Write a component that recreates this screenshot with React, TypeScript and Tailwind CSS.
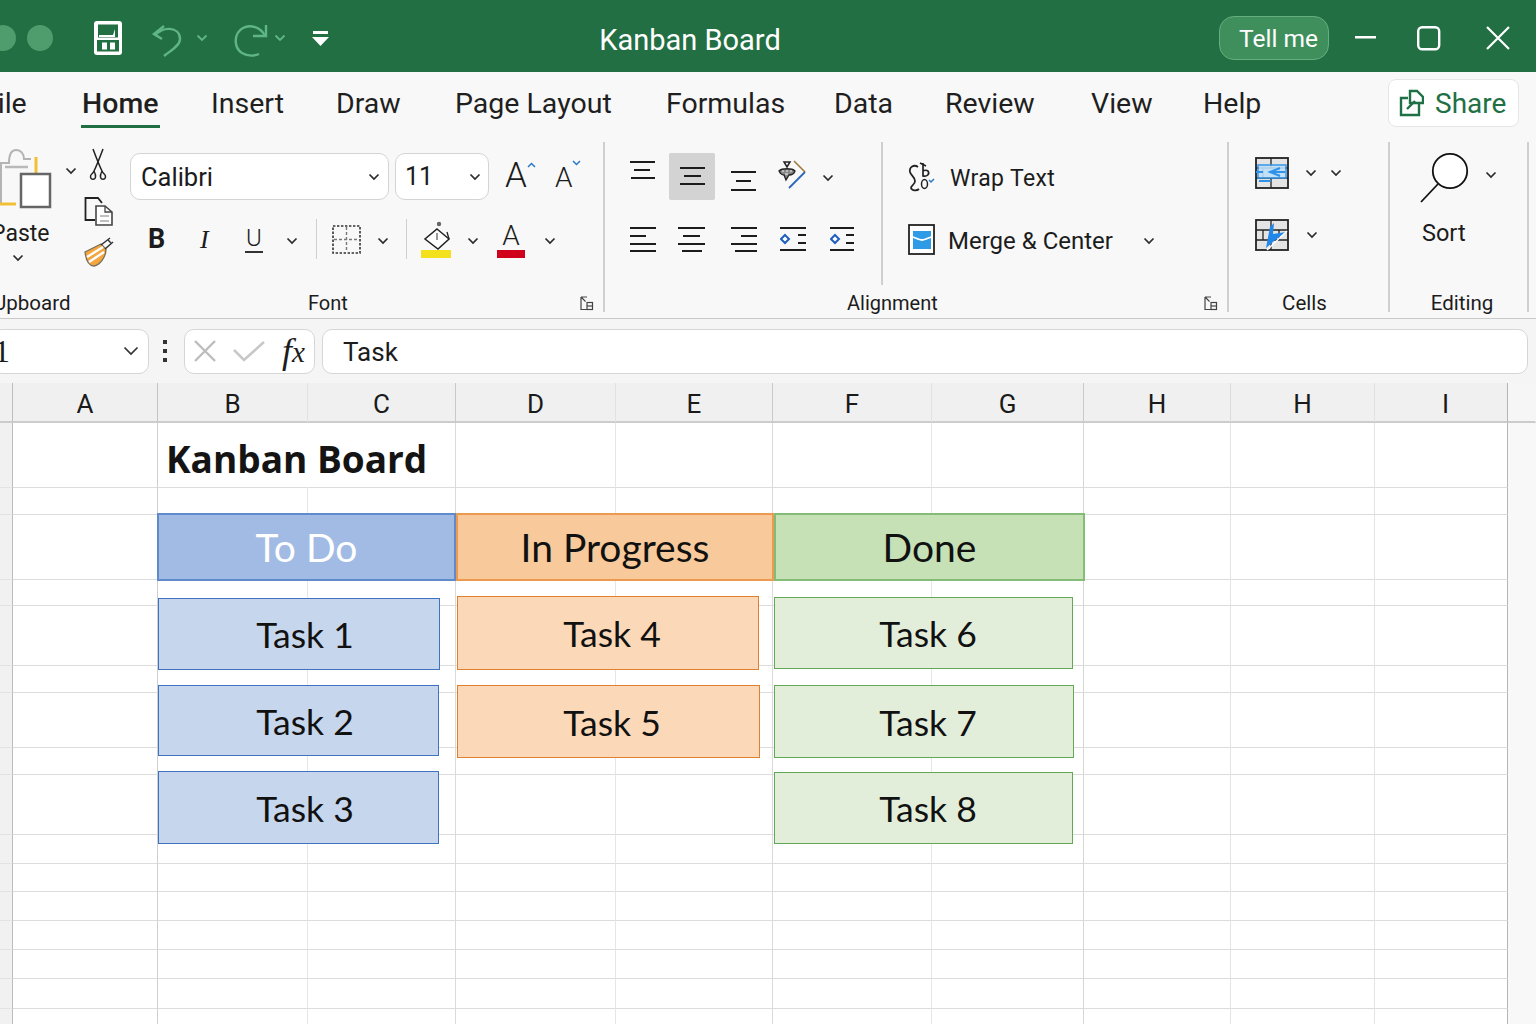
import React from "react";

const Chev = ({ className = "" }: { className?: string }) => (
  <svg width="12" height="8" viewBox="0 0 12 8" fill="none" className={"shrink-0 " + className}>
    <path d="M1.5 1.5 L6 6 L10.5 1.5" stroke="#2b2b2b" strokeWidth="1.7" />
  </svg>
);

const QatChev = ({ className = "" }: { className?: string }) => (
  <svg width="12" height="8" viewBox="0 0 12 8" fill="none" className={"shrink-0 " + className}>
    <path d="M1.5 1.5 L6 6 L10.5 1.5" stroke="#5fb585" strokeWidth="1.8" />
  </svg>
);

const Launcher = ({ className = "" }: { className?: string }) => (
  <svg width="14" height="15" viewBox="0 0 14 15" fill="none" className={className} stroke="#444" strokeWidth="1.2">
    <path d="M1 1 H7 M1 1 V13.5 H12.5 M1 1 L5.5 5.5" />
    <rect x="7" y="6.5" width="5.5" height="7" />
    <path d="M7 10 H12.5" />
  </svg>
);

const Lines = ({ w, lines }: { w: number; lines: [number, number, number][] }) => (
  <svg width={w} height="47" viewBox={`0 0 ${w} 47`} fill="none" className="shrink-0">
    {lines.map(([x1, x2, y], i) => (
      <path key={i} d={`M${x1} ${y} H${x2}`} stroke="#1c1c1c" strokeWidth="2" />
    ))}
  </svg>
);

const Indent = ({ w }: { w: number }) => (
  <svg width={w} height="47" viewBox={`0 0 ${w} 47`} fill="none" className="shrink-0">
    <path d={`M0 12 H${w} M0 34 H${w}`} stroke="#1c1c1c" strokeWidth="2" />
    <path d={`M${w - 8} 19 H${w} M${w - 8} 27 H${w}`} stroke="#1c1c1c" strokeWidth="2" />
    <path d="M5 20 L9 24 L5 28 L1 24 Z" transform="translate(0 -1)" stroke="#1f5fbf" strokeWidth="2" fill="white" />
  </svg>
);

const SaveIcon = () => (
  <svg width="28" height="34" viewBox="0 0 28 34" className="shrink-0">
    <rect x="0" y="0" width="28" height="34" rx="3" fill="#ffffff" />
    <rect x="4" y="3.5" width="20" height="13" fill="#236f44" />
    <path d="M5 14 H19 L21 8 V16 H5 Z" fill="#fff" />
    <rect x="3" y="19" width="22" height="11.5" fill="#236f44" />
    <rect x="8" y="21.5" width="5" height="7" fill="#fff" />
    <rect x="16" y="21.5" width="5" height="7" fill="#fff" />
  </svg>
);

const PasteIcon = () => (
  <svg width="62" height="62" viewBox="0 0 62 62" fill="none" className="shrink-0">
    <path d="M1 57 V15 H9 C9 6 11 2 16 2 C21 2 24 6 24 11 H31" stroke="#b4b4b4" strokeWidth="2" />
    <path d="M36 9 V26" stroke="#f2c037" strokeWidth="3" />
    <path d="M0 56 H16" stroke="#f2c037" strokeWidth="3" />
    <path d="M5 19 H28" stroke="#b9b9b9" strokeWidth="2.5" />
    <rect x="21" y="26" width="29" height="33" fill="#fff" stroke="#666" strokeWidth="2.5" />
  </svg>
);

const Scissors = () => (
  <svg width="18" height="33" viewBox="0 0 18 33" fill="none" stroke="#222" strokeWidth="1.5" className="shrink-0">
    <path d="M4 1 C7 9 10 17 13 23 C14 26 17 26 16.5 29 C16 32 12 32 11.5 29 C11 27 12 25 13 23" />
    <path d="M14 1 C11 9 8 17 5 23 C4 26 1 26 1.5 29 C2 32 6 32 6.5 29 C7 27 6 25 5 23" />
  </svg>
);

const CopyIcon = () => (
  <svg width="29" height="29" viewBox="0 0 29 29" fill="none" className="shrink-0">
    <path d="M11 23 H1.5 V1 H14 L18 6" stroke="#222" strokeWidth="1.8" />
    <path d="M12 9 H21 L28 15 V28 H12 Z" fill="#fff" stroke="#444" strokeWidth="1.6" />
    <path d="M21 9 V15 H28" stroke="#444" strokeWidth="1.3" />
    <path d="M16 19 H25 M16 24 H25" stroke="#aaa" strokeWidth="1.6" />
  </svg>
);

const Painter = () => (
  <svg width="30" height="30" viewBox="0 0 30 30" fill="none" className="shrink-0">
    <path d="M1 15 L17 7 L22 12 C22 20 16 28 10 29 C5 29 2 23 1 15 Z" fill="#f4a53e" stroke="#77705f" strokeWidth="1.3" />
    <path d="M3 20 L19 10 M5 25 L20 15" stroke="#fff" strokeWidth="2.4" />
    <path d="M17 8 L26 1 M21 12 L29 5" stroke="#333" strokeWidth="1.5" />
    <path d="M24 3 L27 6" stroke="#333" strokeWidth="1.4" />
  </svg>
);

const BorderIcon = () => (
  <svg width="29" height="29" viewBox="0 0 29 29" fill="none" className="shrink-0">
    <rect x="1" y="1" width="27" height="27" stroke="#333" strokeWidth="1.6" strokeDasharray="2.4 1.6" />
    <path d="M14.5 2 V27 M2 14.5 H27" stroke="#777" strokeWidth="1.4" strokeDasharray="3 2" />
  </svg>
);

const FillIcon = () => (
  <div className="flex w-[30px] shrink-0 flex-col">
    <svg width="30" height="30" viewBox="0 0 30 30" fill="none" className="-mb-[1px]">
      <circle cx="18" cy="3" r="2.2" fill="#666" />
      <path d="M16 8 L28 18 L17 28 L4 18 Z" stroke="#222" strokeWidth="1.5" fill="#fff" />
      <path d="M16 12 V19" stroke="#555" strokeWidth="1.2" />
      <path d="M26 11 L28 18" stroke="#222" strokeWidth="1.3" />
    </svg>
    <div className="h-[8px] bg-[#f3e21b]" />
  </div>
);

const Orientation = () => (
  <svg width="28" height="47" viewBox="0 0 28 47" fill="none" className="shrink-0">
    <path d="M16 8 L27 19" stroke="#a07a3a" strokeWidth="1.6" />
    <path d="M27 19 L11 35" stroke="#2a66b8" strokeWidth="1.8" />
    <path d="M6 9 H12 L9 14 Z" stroke="#222" strokeWidth="1.5" />
    <path d="M1 18 C4 15 14 15 17 18 C16 21 13 22 11 22 L8 27 L6 22 C3 22 2 20 1 18 Z" fill="#888" stroke="#222" strokeWidth="1.3" />
    <path d="M4 18 H6 M8 18 H10 M12 18 H14 M7 21 H10" stroke="#eee" strokeWidth="1.1" />
  </svg>
);

const WrapIcon = () => (
  <svg width="27" height="30" viewBox="0 0 27 30" fill="none" className="shrink-0">
    <path d="M10 5 C6 2 1 5 2 10 C3 14 7 15 7 19 C7 23 3 23 3 26 C4 29 9 29 11 27" stroke="#222" strokeWidth="1.8" />
    <path d="M12 1 L18 4 M15 1 L15 14 C19 15 22 12 20 9 C19 8 16 8 15 9" stroke="#222" strokeWidth="1.7" />
    <ellipse cx="16.5" cy="22" rx="3" ry="4.5" stroke="#222" strokeWidth="1.5" />
    <path d="M21 18 L23 20 L26 17" stroke="#2a78c8" strokeWidth="1.5" />
  </svg>
);

const MergeIcon = () => (
  <svg width="27" height="31" viewBox="0 0 27 31" fill="none" className="shrink-0">
    <rect x="1" y="1" width="25" height="29" fill="#fff" stroke="#222" strokeWidth="1.8" />
    <rect x="5" y="7" width="18" height="18" fill="#2f9be6" />
    <path d="M5 13 C10 15 12 16 14 16 C16 16 18 15 23 13" stroke="#fff" strokeWidth="1.8" />
    <rect x="5" y="21" width="18" height="4" fill="#2f9be6" />
  </svg>
);

const CellFrame = ({ children }: { children: React.ReactNode }) => (
  <svg width="34" height="32" viewBox="0 0 34 32" fill="none" className="shrink-0">
    <rect x="1" y="1" width="32" height="30" fill="#e4e4e4" stroke="#222" strokeWidth="1.8" />
    <path d="M1 11 H33 M1 21 H33 M16 1 V11 M8 11 V21 M24 11 V21 M16 21 V31" stroke="#222" strokeWidth="1.3" />
    {children}
  </svg>
);

const Magnifier = () => (
  <svg width="50" height="53" viewBox="0 0 50 53" fill="none" className="shrink-0">
    <circle cx="30" cy="19" r="17.2" fill="#fff" stroke="#111" strokeWidth="1.8" />
    <path d="M18 32 L1 50" stroke="#111" strokeWidth="1.8" />
  </svg>
);

const colTpl = "grid grid-cols-[13px_145px_150px_148px_160px_157px_159px_152px_147px_144px_133px_28px]";
const headBorders = [
  "border-r-[#bdbdbd]",
  "border-r-[#c4c4c4]",
  "border-r-[#e2e2e2]",
  "border-r-[#c8c8c8]",
  "border-r-[#e2e2e2]",
  "border-r-[#c8c8c8]",
  "border-r-[#e2e2e2]",
  "border-r-[#c8c8c8]",
  "border-r-[#dcdcdc]",
  "border-r-[#e2e2e2]",
  "border-r-[#b5b5b5]",
  "border-r-transparent",
];
const heads = ["", "A", "B", "C", "D", "E", "F", "G", "H", "H", "I", ""];
const rowCount = 16;

const colLine = [
  "bg-[#f1f1f1] border-r-[#bcbcbc] border-b-[#e3e3e3]",
  "bg-white border-r-[#cfcfcf] border-b-[#dcdcdc]",
  "bg-white border-r-[#e6e6e6] border-b-[#dcdcdc]",
  "bg-white border-r-[#dadada] border-b-[#dcdcdc]",
  "bg-white border-r-[#e6e6e6] border-b-[#dcdcdc]",
  "bg-white border-r-[#dadada] border-b-[#dcdcdc]",
  "bg-white border-r-[#e6e6e6] border-b-[#dcdcdc]",
  "bg-white border-r-[#d6d6d6] border-b-[#dcdcdc]",
  "bg-white border-r-[#e3e3e3] border-b-[#dcdcdc]",
  "bg-white border-r-[#e3e3e3] border-b-[#dcdcdc]",
  "bg-white border-r-[#b5b5b5] border-b-[#dcdcdc]",
  "bg-[#f8f8f8] border-r-transparent border-b-transparent",
];

const shapes = [
  { t: "To Do", c: "left-[157px] top-[90px] w-[299px] h-[68px] border-2 text-[39px] bg-[#a2bbe4] border-[#5f8bcb] text-white" },
  { t: "In Progress", c: "left-[456px] top-[90px] w-[318px] h-[68px] border-2 text-[39px] bg-[#f7c99b] border-[#ec9a50] text-[#111]" },
  { t: "Done", c: "left-[774px] top-[90px] w-[311px] h-[68px] border-2 text-[39px] bg-[#c7e1b7] border-[#82bc76] text-[#111]" },
  { t: "Task 1", c: "left-[158px] top-[175px] w-[282px] h-[72px] pl-[12px] pt-[2px] border text-[35.5px] bg-[#c6d6ec] border-[#3f73c0] text-[#111]" },
  { t: "Task 2", c: "left-[158px] top-[262px] w-[281px] h-[71px] pl-[13px] pt-[2px] border text-[35.5px] bg-[#c6d6ec] border-[#3f73c0] text-[#111]" },
  { t: "Task 3", c: "left-[158px] top-[348px] w-[281px] h-[73px] pl-[13px] pt-[2px] border text-[35.5px] bg-[#c6d6ec] border-[#3f73c0] text-[#111]" },
  { t: "Task 4", c: "left-[457px] top-[173px] w-[302px] h-[74px] pl-[8px] pt-[2px] border text-[35.5px] bg-[#fbd9b8] border-[#e07f2e] text-[#111]" },
  { t: "Task 5", c: "left-[457px] top-[262px] w-[303px] h-[73px] pl-[7px] pt-[2px] border text-[35.5px] bg-[#fbd9b8] border-[#e07f2e] text-[#111]" },
  { t: "Task 6", c: "left-[774px] top-[174px] w-[299px] h-[72px] pl-[9px] pt-[2px] border text-[35.5px] bg-[#e2eeda] border-[#62a856] text-[#111]" },
  { t: "Task 7", c: "left-[774px] top-[262px] w-[300px] h-[73px] pl-[8px] pt-[2px] border text-[35.5px] bg-[#e2eeda] border-[#62a856] text-[#111]" },
  { t: "Task 8", c: "left-[774px] top-[349px] w-[299px] h-[72px] pl-[9px] pt-[2px] border text-[35.5px] bg-[#e2eeda] border-[#62a856] text-[#111]" },
];

export default function App() {
  return (
    <div className="flex h-[1024px] w-[1536px] flex-col overflow-hidden bg-white font-['Roboto',sans-serif] text-[#1c1c1c]">
      {/* Title bar */}
      <div className="flex h-[72px] shrink-0 items-center bg-[#236f44] pt-[4px] text-white">
        <div className="-ml-[10px] h-[26px] w-[26px] shrink-0 rounded-full bg-[#4f9c6c]" />
        <div className="ml-[11px] h-[26px] w-[26px] shrink-0 rounded-full bg-[#4f9c6c]" />
        <div className="ml-[41px] flex"><SaveIcon /></div>
        <svg width="30" height="32" viewBox="0 0 30 32" fill="none" className="ml-[30px] mt-[6px] shrink-0" stroke="#5fb585" strokeWidth="2.4">
          <path d="M3 11 C9 1 28 1 28 14 C28 21 18 26 12 31" />
          <path d="M12 1 L2 9 L10 14" />
        </svg>
        <QatChev className="ml-[14px]" />
        <svg width="34" height="33" viewBox="0 0 34 33" fill="none" className="ml-[26px] mt-[4px] shrink-0" stroke="#5fb585" strokeWidth="2.4">
          <path d="M31 12 C27 3 16 0 9 4 C0 9 -1 23 8 29 C13 32 20 32 25 30" />
          <path d="M19 12 H32 V1" />
        </svg>
        <QatChev className="ml-[6px]" />
        <svg width="17" height="15" viewBox="0 0 17 15" className="ml-[26px] shrink-0">
          <rect x="1" y="0" width="15" height="3" fill="#fff" />
          <path d="M0 6 H17 L8.5 15 Z" fill="#fff" />
        </svg>
        <div className="ml-[269px] w-[184px] pt-[4px] text-center text-[29px] font-normal leading-none">Kanban Board</div>
        <div className="ml-[437px] -mt-[1px] flex h-[44px] w-[110px] shrink-0 items-center rounded-[15px] border border-[#66ad80] bg-[#3f8f5d] pl-[19px] pt-[4px] text-[24.5px]">
          Tell me
        </div>
        <svg width="22" height="4" viewBox="0 0 22 4" className="ml-[26px] shrink-0">
          <rect width="21" height="2.5" fill="#fff" />
        </svg>
        <svg width="24" height="25" viewBox="0 0 24 25" fill="none" className="ml-[40px] shrink-0">
          <rect x="1.2" y="1.2" width="21" height="22" rx="4" stroke="#fff" strokeWidth="2.4" />
        </svg>
        <svg width="24" height="24" viewBox="0 0 24 24" fill="none" className="ml-[45px] shrink-0">
          <path d="M1 1 L23 23 M23 1 L1 23" stroke="#fff" strokeWidth="2.2" />
        </svg>
      </div>

      {/* Ribbon tabs */}
      <div className="flex h-[63px] shrink-0 items-start bg-[#f8f8f8] text-[28.5px] leading-[34px] text-[#1f1f1f]">
        <div className="-ml-[18px] h-[56px] w-[99px] shrink-0 pt-[15px]">File</div>
        <div className="h-[56px] w-[79px] shrink-0 border-b-[3px] border-[#1f6f43] pl-[1px] pt-[15px] font-medium">Home</div>
        <div className="ml-[51px] h-[56px] w-[125px] shrink-0 pt-[15px]">Insert</div>
        <div className="h-[56px] w-[119px] shrink-0 pt-[15px]">Draw</div>
        <div className="h-[56px] w-[211px] shrink-0 pt-[15px]">Page Layout</div>
        <div className="h-[56px] w-[168px] shrink-0 pt-[15px]">Formulas</div>
        <div className="h-[56px] w-[111px] shrink-0 pt-[15px]">Data</div>
        <div className="h-[56px] w-[146px] shrink-0 pt-[15px]">Review</div>
        <div className="h-[56px] w-[112px] shrink-0 pt-[15px]">View</div>
        <div className="h-[56px] shrink-0 pt-[15px]">Help</div>
        <div className="ml-auto mr-[17px] mt-[7px] flex h-[48px] w-[131px] items-center gap-[11px] rounded-[8px] border border-[#e6e6e6] bg-white pl-[10px] text-[28px] text-[#1f7045]">
          <svg width="25" height="28" viewBox="0 0 25 28" fill="none" stroke="#1f7045" strokeWidth="2.4" className="shrink-0">
            <path d="M9 9 H2 V26 H20 V15" />
            <path d="M11 2 H18 L24 8 V14 H11 Z" />
            <path d="M8 20 L16 12" />
          </svg>
          <span className="pt-[2px]">Share</span>
        </div>
      </div>

      {/* Ribbon body */}
      <div className="flex h-[184px] shrink-0 items-start border-b border-[#c9c9c9] bg-[#f8f8f8] text-[23px]">
        {/* Clipboard */}
        <div className="mt-[13px] flex h-[165px] w-[120px] shrink-0 flex-col">
          <div className="flex flex-1">
            <div className="flex w-[84px] shrink-0 flex-col">
              <div className="flex">
                <PasteIcon />
                <Chev className="ml-[3px] mt-[19px]" />
              </div>
              <div className="-ml-[9px] mt-[11px] leading-[26px]">Paste</div>
              <Chev className="ml-[12px] mt-[7px]" />
            </div>
            <div className="flex flex-col">
              <div className="ml-[5px]"><Scissors /></div>
              <div className="mt-[16px]"><CopyIcon /></div>
              <div className="mt-[11px]"><Painter /></div>
            </div>
          </div>
          <div className="-ml-[7px] text-[20.5px] leading-[20px]">Upboard</div>
        </div>

        {/* Font */}
        <div className="mt-[7px] flex h-[170px] w-[485px] shrink-0 flex-col border-r-2 border-[#cfcfcf] pt-[11px]">
          <div className="ml-[10px] flex h-[47px] items-center">
            <div className="flex h-[47px] w-[259px] shrink-0 items-center justify-between rounded-[10px] border border-[#d4d4d4] bg-white pl-[10px] pr-[8px] pt-[1px] text-[25.5px]">
              Calibri <Chev />
            </div>
            <div className="ml-[6px] flex h-[47px] w-[94px] shrink-0 items-center justify-between rounded-[10px] border border-[#d4d4d4] bg-white pl-[9px] pr-[7px] pt-[1px] text-[25px]">
              11 <Chev />
            </div>
            <div className="ml-[16px] -mt-[2px] flex items-start">
              <span className="text-[35px] font-light leading-[38px]">A</span>
              <svg width="9" height="6" viewBox="0 0 9 6" fill="none" className="mt-[5px]">
                <path d="M1 5 L4.5 1.5 L8 5" stroke="#2a78c8" strokeWidth="1.5" />
              </svg>
            </div>
            <div className="ml-[19px] -mt-[2px] flex items-start">
              <span className="mt-[5px] text-[28px] font-light leading-[36px]">A</span>
              <svg width="9" height="6" viewBox="0 0 9 6" fill="none" className="mt-[5px]">
                <path d="M1 1 L4.5 4.5 L8 1" stroke="#2a78c8" strokeWidth="1.5" />
              </svg>
            </div>
          </div>
          <div className="ml-[10px] mt-[16px] flex h-[46px] items-center">
            <span className="ml-[18px] w-[17px] shrink-0 text-[27px] font-bold">B</span>
            <span className="ml-[35px] w-[12px] shrink-0 font-['Liberation_Serif',serif] text-[26px] italic">I</span>
            <span className="ml-[33px] w-[18px] shrink-0 border-b-2 border-[#333] text-center text-[24px] font-light leading-[26px]">U</span>
            <Chev className="ml-[23px] mt-[4px]" />
            <div className="ml-[18px] h-[40px] w-px shrink-0 bg-[#cfcfcf]" />
            <div className="ml-[15px] flex"><BorderIcon /></div>
            <Chev className="ml-[16px] mt-[4px]" />
            <div className="ml-[17px] h-[40px] w-px shrink-0 bg-[#cfcfcf]" />
            <div className="ml-[14px] flex"><FillIcon /></div>
            <Chev className="ml-[16px] mt-[4px]" />
            <div className="ml-[18px] flex w-[28px] shrink-0 flex-col items-center">
              <span className="text-[28px] font-light leading-[29px]">A</span>
              <div className="h-[8px] w-full bg-[#d0021b]" />
            </div>
            <Chev className="ml-[19px] mt-[4px]" />
          </div>
          <div className="-mb-[1px] mt-auto flex items-center">
            <span className="ml-[188px] text-[20px] leading-[20px]">Font</span>
            <Launcher className="ml-auto mr-[9px]" />
          </div>
        </div>

        {/* Alignment */}
        <div className="mt-[7px] flex h-[170px] w-[624px] shrink-0 flex-col border-r-2 border-[#cfcfcf]">
          <div className="flex">
            <div className="flex w-[276px] shrink-0 flex-col pt-[11px]">
              <div className="flex h-[47px] items-center">
                <div className="ml-[25px] flex"><Lines w={26} lines={[[0, 25, 9], [4, 20, 17], [1, 25, 25]]} /></div>
                <div className="ml-[13px] flex h-[47px] w-[46px] shrink-0 items-center justify-center rounded-[2px] bg-[#d3d3d3]">
                  <Lines w={26} lines={[[1, 26, 15], [5, 22, 23], [1, 26, 31]]} />
                </div>
                <div className="ml-[16px] flex"><Lines w={26} lines={[[0, 25, 19], [5, 20, 28], [0, 25, 37]]} /></div>
                <div className="ml-[21px] flex"><Orientation /></div>
                <Chev className="ml-[16px] mt-[2px]" />
              </div>
              <div className="mt-[16px] flex h-[47px] items-center">
                <div className="ml-[25px] flex"><Lines w={27} lines={[[0, 26, 12], [0, 16, 20], [0, 26, 28], [0, 26, 35]]} /></div>
                <div className="ml-[21px] flex"><Lines w={28} lines={[[0, 27, 12], [5, 22, 20], [0, 27, 28], [4, 24, 35]]} /></div>
                <div className="ml-[25px] flex"><Lines w={27} lines={[[0, 26, 12], [10, 26, 20], [0, 26, 28], [4, 26, 35]]} /></div>
                <div className="ml-[22px] flex"><Indent w={26} /></div>
                <div className="ml-[24px] flex"><Indent w={24} /></div>
              </div>
            </div>
            <div className="flex h-[143px] flex-1 flex-col border-l-2 border-[#cfcfcf] pt-[11px]">
              <div className="flex h-[47px] items-center">
                <div className="ml-[25px] flex"><WrapIcon /></div>
                <span className="ml-[15px] pt-[5px] text-[23px] tracking-[0.35px]">Wrap Text</span>
              </div>
              <div className="mt-[16px] flex h-[47px] items-center">
                <div className="ml-[25px] flex"><MergeIcon /></div>
                <span className="ml-[13px] pt-[2px] text-[24px]">Merge &amp; Center</span>
                <Chev className="ml-[30px] mt-[2px]" />
              </div>
            </div>
          </div>
          <div className="-mb-[1px] mt-auto flex items-center">
            <span className="ml-[242px] text-[20px] leading-[20px]">Alignment</span>
            <Launcher className="ml-auto mr-[9px]" />
          </div>
        </div>

        {/* Cells */}
        <div className="mt-[7px] flex h-[170px] w-[161px] shrink-0 flex-col border-r-2 border-[#cfcfcf] pt-[15px]">
          <div className="ml-[26px] flex h-[32px] items-center">
            <CellFrame>
              <rect x="3" y="8" width="28" height="13" stroke="#2e93e8" strokeWidth="1.6" fill="#bfe0fa" opacity="0.9" />
              <path d="M4 24 H16 M1 15 H8 M25 11 L15 15 L25 19 M15 15 H30" stroke="#2e93e8" strokeWidth="2" />
            </CellFrame>
            <Chev className="ml-[16px]" />
            <Chev className="ml-[13px]" />
          </div>
          <div className="ml-[26px] mt-[30px] flex h-[32px] items-center">
            <CellFrame>
              <path d="M11 29 L15 8 L19 4 L18 15 L31 13 L19 22 Z" fill="#2087ea" />
              <path d="M12 31 L32 12" stroke="#fff" strokeWidth="1.4" />
            </CellFrame>
            <Chev className="ml-[17px]" />
          </div>
          <div className="-mb-[1px] mt-auto pr-[8px] text-center text-[20.5px] leading-[20px]">Cells</div>
        </div>

        {/* Editing */}
        <div className="mt-[7px] flex h-[170px] w-[139px] shrink-0 flex-col border-r-2 border-[#cfcfcf] pt-[10px]">
          <div className="flex items-start">
            <div className="ml-[30px] flex"><Magnifier /></div>
            <Chev className="ml-[15px] mt-[19px]" />
          </div>
          <div className="ml-[32px] mt-[14px] text-[23.5px] leading-[28px]">Sort</div>
          <div className="-mb-[1px] mt-auto pl-[7px] text-center text-[20.5px] leading-[20px]">Editing</div>
        </div>
      </div>

      {/* Formula bar */}
      <div className="flex h-[64px] shrink-0 items-center bg-[#f5f5f5]">
        <div className="-ml-[8px] flex h-[45px] w-[157px] shrink-0 items-center justify-between rounded-[10px] border border-[#d6d6d6] bg-white pr-[9px]">
          <span className="ml-[1px] font-['Liberation_Serif',serif] text-[32px] leading-none">1</span>
          <svg width="16" height="10" viewBox="0 0 16 10" fill="none">
            <path d="M1.5 1.5 L8 8 L14.5 1.5" stroke="#333" strokeWidth="1.7" />
          </svg>
        </div>
        <div className="ml-[14px] flex w-[4px] shrink-0 flex-col gap-[5px]">
          <div className="h-[4px] bg-[#333]" />
          <div className="h-[4px] bg-[#333]" />
          <div className="h-[4px] bg-[#333]" />
        </div>
        <div className="ml-[17px] flex h-[45px] w-[131px] shrink-0 items-center rounded-[10px] border border-[#d6d6d6] bg-white">
          <svg width="22" height="22" viewBox="0 0 22 22" fill="none" className="ml-[9px] shrink-0">
            <path d="M1 1 L21 21 M21 1 L1 21" stroke="#bdbdbd" strokeWidth="2.4" />
          </svg>
          <svg width="32" height="22" viewBox="0 0 32 22" fill="none" className="ml-[17px] shrink-0">
            <path d="M1 10 L11 20 L31 2" stroke="#c8c8c8" strokeWidth="2.6" />
          </svg>
          <span className="ml-[17px] font-['Liberation_Serif',serif] text-[36px] italic leading-none">f</span>
          <span className="pt-[3px] font-['Liberation_Serif',serif] text-[29px] italic leading-none">x</span>
        </div>
        <div className="ml-[7px] flex h-[45px] w-[1206px] shrink-0 items-center rounded-[10px] border border-[#d6d6d6] bg-white pl-[20px] pt-[2px] text-[26px]">
          Task
        </div>
      </div>

      {/* Column headers */}
      <div className={colTpl + " h-[40px] shrink-0 grid-rows-[40px]"}>
        {heads.map((h, i) => (
          <div
            key={i}
            className={
              "flex items-center justify-center border-b-2 border-r border-b-[#cccccc] pt-[3px] text-[26px] font-normal leading-none text-[#1a1a1a] " +
              (i === 10 ? "pl-[9px] " : "") +
              (i === 11 ? "bg-[#f6f6f6] " : "bg-[#f0f0f0] ") +
              headBorders[i]
            }
          >
            {h}
          </div>
        ))}
      </div>

      {/* Sheet */}
      <div className="relative flex-1">
        <div
          className={
            colTpl +
            " grid-rows-[65px_27px_65px_26px_60px_27px_55px_27px_60px_29px_28px_29px_29px_29px_30px_40px]"
          }
        >
          {Array.from({ length: rowCount }).flatMap((_, r) =>
            colLine.map((c, i) => (
              <div
                key={r + "-" + i}
                className={
                  "border-b border-r " +
                  c +
                  (r === 0 && i === 2
                    ? " relative z-10 !border-r-transparent !bg-transparent overflow-visible whitespace-nowrap pl-[8px] pt-[8px] font-['Open_Sans',sans-serif] text-[37px] font-bold leading-[56px] text-[#141414]"
                    : "")
                }
              >
                {r === 0 && i === 2 ? "Kanban Board" : null}
              </div>
            ))
          )}
        </div>
        {shapes.map((s) => (
          <div
            key={s.t}
            className={"absolute flex items-center justify-center font-['Lato',sans-serif] " + s.c}
          >
            {s.t}
          </div>
        ))}
      </div>
    </div>
  );
}
